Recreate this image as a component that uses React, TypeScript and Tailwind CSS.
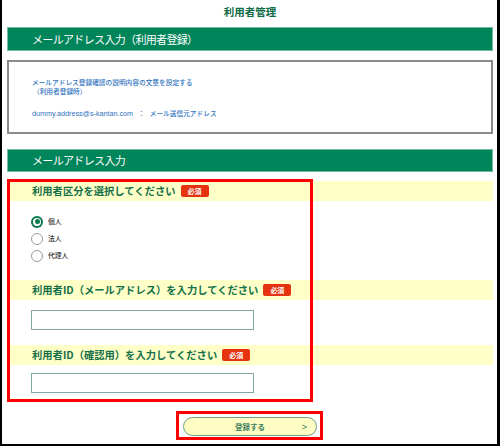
import React from "react";

const jp = "font-['Noto_Sans_CJK_JP',sans-serif]";

function Badge() {
  return (
    <span className="ml-[5px] inline-flex items-center justify-center w-[28px] h-[12px] rounded-[2px] bg-[#e5330f] text-white text-[7px] font-bold leading-none">
      必須
    </span>
  );
}

function Band({ children }: { children: React.ReactNode }) {
  return (
    <div className="h-[20px] bg-[#ffffc8] flex items-center pl-[25px]">
      <span className="text-[10.3px] font-bold text-[#15704a] leading-none whitespace-nowrap">{children}</span>
      <Badge />
    </div>
  );
}

function Radio({ label, checked }: { label: string; checked?: boolean }) {
  return (
    <div className="h-[17px] flex items-center pl-[24px]">
      {checked ? (
        <div className="w-[12px] h-[12px] rounded-full bg-[#0b7a4f] flex items-center justify-center">
          <div className="w-[8px] h-[8px] rounded-full bg-white flex items-center justify-center">
            <div className="w-[5px] h-[5px] rounded-full bg-[#0b7a4f]" />
          </div>
        </div>
      ) : (
        <div className="w-[12px] h-[12px] rounded-full bg-white border border-[#9a9a9a]" />
      )}
      <span className="ml-[5px] text-[6.8px] font-medium text-[#333] leading-none">{label}</span>
    </div>
  );
}

export default function App() {
  return (
    <div className={`w-[500px] h-[446px] bg-white border-l-2 border-r-[3px] border-b-2 border-black pl-[5px] pr-[4px] overflow-hidden ${jp}`}>
      {/* title */}
      <div className="h-[27px] pb-[3px] flex items-center justify-center">
        <span className="text-[10.5px] font-bold text-[#0f6b45] leading-none">利用者管理</span>
      </div>

      <div className="h-[24px] bg-[#00845a] border border-[#6fbf9f] flex items-center pl-[24px]">
        <span className="text-white text-[11px] tracking-[-0.06em] leading-none">メールアドレス入力（利用者登録）</span>
      </div>

      <div className="mt-[9px] h-[74px] border-2 border-[#8c8c8c] pl-[23px] pt-[16px] text-[#2f72c0] font-medium">
        <div className="text-[6.7px] leading-[9px]">メールアドレス登録確認の説明内容の文章を設定する</div>
        <div className="text-[6.7px] leading-[9px] pl-[1px]">（利用者登録時）</div>
        <div className="mt-[13px] text-[6.7px] leading-[9px] flex items-center">
          <span className="font-['Liberation_Sans',sans-serif] font-normal text-[7.2px]">dummy.address@s-kantan.com</span>
          <span className="ml-[5px]">：</span>
          <span className="ml-[5px]">メール送信元アドレス</span>
        </div>
      </div>

      <div className="mt-[15px] h-[23px] bg-[#00845a] border border-[#6fbf9f] flex items-center pl-[24px]">
        <span className="text-white text-[11px] tracking-[-0.06em] leading-none">メールアドレス入力</span>
      </div>

      {/* form */}
      <div className="relative mt-[7px] pt-[2px] pb-[9px]">
        <Band>利用者区分を選択してください</Band>
        <div className="mt-[12px]">
          <Radio label="個人" checked />
          <Radio label="法人" />
          <Radio label="代理人" />
        </div>
        <div className="mt-[16px]">
          <Band>利用者ID（メールアドレス）を入力してください</Band>
        </div>
        <div className="mt-[10px] pl-[24px]">
          <input className="block w-[223px] h-[20px] border border-[#7fa9a0] bg-white outline-none" />
        </div>
        <div className="mt-[15px]">
          <Band>利用者ID（確認用）を入力してください</Band>
        </div>
        <div className="mt-[8px] pl-[24px]">
          <input className="block w-[223px] h-[20px] border border-[#7fa9a0] bg-white outline-none" />
        </div>
        <div className="absolute left-0 top-0 w-[306px] h-[223px] border-[3px] border-[#ff0000] pointer-events-none" />
      </div>

      {/* submit */}
      <div className="mt-[15px] flex justify-center">
        <div className="relative">
          <button className="relative w-[134px] h-[19px] rounded-full bg-[#fdfcc2] border border-[#6f9f86] flex items-center justify-center">
            <span className="text-[7.5px] font-bold text-[#3f7f5f] leading-none">登録する</span>
            <span className="absolute right-[9px] top-1/2 -translate-y-1/2 text-[9px] text-[#3f7f5f] leading-none font-['Liberation_Sans',sans-serif]">&gt;</span>
          </button>
          <div className="absolute -left-[7px] -right-[6px] -top-[6px] -bottom-[4px] border-[3px] border-[#ff0000] pointer-events-none" />
        </div>
      </div>
    </div>
  );
}
